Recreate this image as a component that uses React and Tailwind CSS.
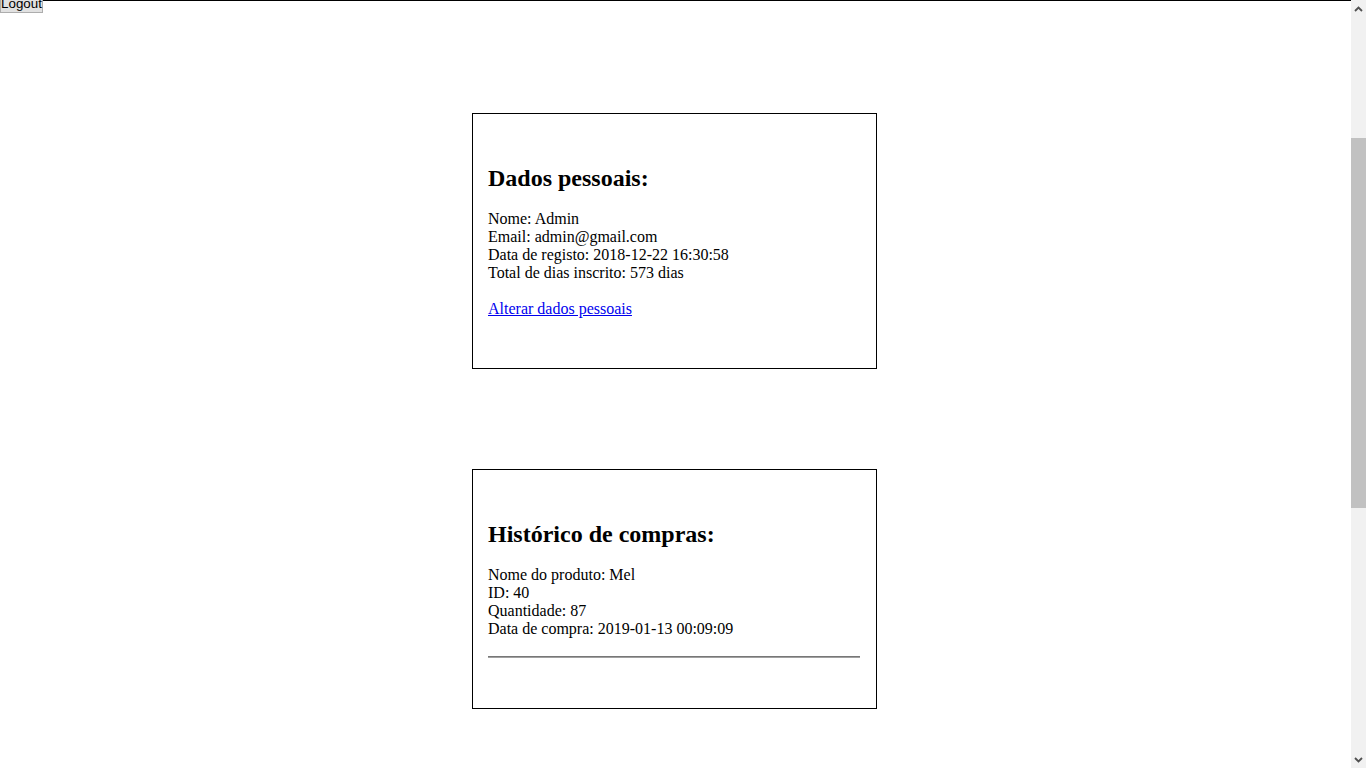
function Card({ title, children }) {
  return (
    <div className="w-[405px] border border-black pl-[15px] pr-[16px] pt-[50px] pb-[50px]">
      <h2 className="text-[24px] leading-[28px] font-bold mb-[18px]">{title}</h2>
      {children}
    </div>
  );
}

function Scrollbar() {
  return (
    <div className="w-[15px] h-full flex flex-col bg-[#f1f1f1] shrink-0">
      <div className="h-[17px] flex items-center justify-center">
        <svg width="9" height="6" viewBox="0 0 9 6">
          <path d="M1 5 L4.5 1.5 L8 5" fill="none" stroke="#505050" strokeWidth="1.8" />
        </svg>
      </div>
      <div className="flex-1 pt-[121px]">
        <div className="h-[370px] bg-[#c1c1c1]" />
      </div>
      <div className="h-[17px] flex items-center justify-center">
        <svg width="9" height="6" viewBox="0 0 9 6">
          <path d="M1 1 L4.5 4.5 L8 1" fill="none" stroke="#505050" strokeWidth="1.8" />
        </svg>
      </div>
    </div>
  );
}

export default function App() {
  return (
    <div className="flex h-[768px] overflow-hidden bg-white font-['Liberation_Serif','Times_New_Roman',serif] text-[16px] leading-[18px] text-black">
      <div className="flex-1 flex flex-col border-t border-black">
        <div className="flex">
          <button className="-mt-[7px] h-[19px] w-[43px] px-0 border border-[#adadad] bg-[#e1e1e1] text-black text-center font-['Liberation_Sans',Arial,sans-serif] text-[13.33px] leading-[15px]">
            Logout
          </button>
        </div>

        <div className="flex flex-col items-center gap-[100px] pt-[100px] pr-[2px]">
          <Card title="Dados pessoais:">
            <div>
              Nome: Admin
              <br />
              Email: admin@gmail.com
              <br />
              Data de registo: 2018-12-22 16:30:58
              <br />
              Total de dias inscrito: 573 dias
              <br />
              <br />
              <a href="#" className="text-[#0000ee] underline">
                Alterar dados pessoais
              </a>
            </div>
          </Card>

          <Card title="Histórico de compras:">
            <div>
              Nome do produto: Mel
              <br />
              ID: 40
              <br />
              Quantidade: 87
              <br />
              Data de compra: 2019-01-13 00:09:09
            </div>
            <div className="mt-[18px] h-[2px] border-t border-t-[#777777] border-b border-b-[#a0a0a0]" />
          </Card>
        </div>
      </div>
      <Scrollbar />
    </div>
  );
}
